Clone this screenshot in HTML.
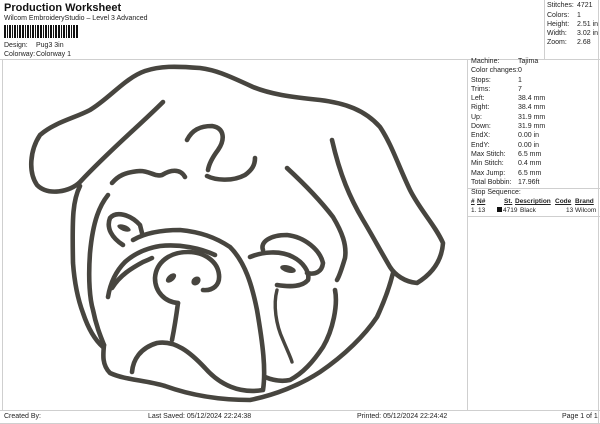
<!DOCTYPE html>
<html><head><meta charset="utf-8"><style>
*{margin:0;padding:0;box-sizing:border-box}
body{width:600px;height:424px;background:#fff;font-family:"Liberation Sans",sans-serif;color:#222;position:relative;overflow:hidden}
.a{position:absolute;white-space:nowrap}
.s{font-size:7px}
.t{font-size:6.5px}
.ln{position:absolute;background:#cfcfcf}
</style></head><body>
<div class="a" style="left:4px;top:2px;font-size:11px;font-weight:bold;color:#111">Production Worksheet</div>
<div class="a s" style="left:4px;top:15px">Wilcom EmbroideryStudio – Level 3 Advanced</div>
<svg class="a" style="left:4px;top:25px" width="74" height="13">
<g fill="#111">
<rect x="0" y="0" width="2" height="13"/><rect x="3" y="0" width="1" height="13"/><rect x="5" y="0" width="2" height="13"/><rect x="8" y="0" width="1" height="13"/><rect x="10" y="0" width="2" height="13"/><rect x="13" y="0" width="1" height="13"/><rect x="15" y="0" width="2" height="13"/><rect x="18" y="0" width="2" height="13"/><rect x="21" y="0" width="1" height="13"/><rect x="23" y="0" width="2" height="13"/><rect x="26" y="0" width="1" height="13"/><rect x="28" y="0" width="2" height="13"/><rect x="31" y="0" width="1" height="13"/><rect x="33" y="0" width="2" height="13"/><rect x="36" y="0" width="2" height="13"/><rect x="39" y="0" width="1" height="13"/><rect x="41" y="0" width="2" height="13"/><rect x="44" y="0" width="1" height="13"/><rect x="46" y="0" width="2" height="13"/><rect x="49" y="0" width="1" height="13"/><rect x="51" y="0" width="2" height="13"/><rect x="54" y="0" width="2" height="13"/><rect x="57" y="0" width="1" height="13"/><rect x="59" y="0" width="2" height="13"/><rect x="62" y="0" width="1" height="13"/><rect x="64" y="0" width="2" height="13"/><rect x="67" y="0" width="1" height="13"/><rect x="69" y="0" width="2" height="13"/><rect x="72" y="0" width="2" height="13"/>
</g></svg>
<div class="a s" style="left:4px;top:42px">Design:</div><div class="a s" style="left:36px;top:42px">Pug3 3in</div>
<div class="a s" style="left:4px;top:51px">Colorway:</div><div class="a s" style="left:36px;top:51px">Colorway 1</div>

<div class="ln" style="left:544px;top:0;width:1px;height:59px"></div>
<div class="a s" style="left:547px;top:2px">Stitches:</div><div class="a s" style="left:577px;top:2px">4721</div>
<div class="a s" style="left:547px;top:12px">Colors:</div><div class="a s" style="left:577px;top:12px">1</div>
<div class="a s" style="left:547px;top:21px">Height:</div><div class="a s" style="left:577px;top:21px">2.51 in</div>
<div class="a s" style="left:547px;top:30px">Width:</div><div class="a s" style="left:577px;top:30px">3.02 in</div>
<div class="a s" style="left:547px;top:39px">Zoom:</div><div class="a s" style="left:577px;top:39px">2.68</div>

<div class="ln" style="left:0;top:59px;width:600px;height:1px"></div>
<div class="ln" style="left:2px;top:59px;width:1px;height:351px"></div>
<div class="ln" style="left:598px;top:0;width:1px;height:423px"></div>
<div class="ln" style="left:467px;top:59px;width:1px;height:351px"></div>
<div class="ln" style="left:467px;top:188px;width:133px;height:1px"></div>
<div class="ln" style="left:467px;top:216px;width:133px;height:1px"></div>
<div class="ln" style="left:0;top:410px;width:600px;height:1px"></div>
<div class="ln" style="left:0;top:423px;width:600px;height:1px"></div>

<div class="a s" style="left:471px;top:57px;line-height:9.3px">Machine:<br>Color changes:<br>Stops:<br>Trims:<br>Left:<br>Right:<br>Up:<br>Down:<br>EndX:<br>EndY:<br>Max Stitch:<br>Min Stitch:<br>Max Jump:<br>Total Bobbin:</div>
<div class="a s" style="left:518px;top:57px;line-height:9.3px">Tajima<br>0<br>1<br>7<br>38.4 mm<br>38.4 mm<br>31.9 mm<br>31.9 mm<br>0.00 in<br>0.00 in<br>6.5 mm<br>0.4 mm<br>6.5 mm<br>17.96ft</div>
<div class="a s" style="left:471px;top:189px">Stop Sequence:</div>
<div class="a t" style="left:471px;top:198px;font-weight:bold;text-decoration:underline">#</div>
<div class="a t" style="left:477px;top:198px;font-weight:bold;text-decoration:underline">N#</div>
<div class="a t" style="left:504px;top:198px;font-weight:bold;text-decoration:underline">St.</div>
<div class="a t" style="left:515px;top:198px;font-weight:bold;text-decoration:underline">Description</div>
<div class="a t" style="left:555px;top:198px;font-weight:bold;text-decoration:underline">Code</div>
<div class="a t" style="left:575px;top:198px;font-weight:bold;text-decoration:underline">Brand</div>
<div class="a t" style="left:471px;top:207px">1.</div>
<div class="a t" style="left:478px;top:207px">13</div>
<div class="a" style="left:497px;top:207px;width:5px;height:5px;background:#111"></div>
<div class="a t" style="left:503px;top:207px">4719</div>
<div class="a t" style="left:520px;top:207px">Black</div>
<div class="a t" style="left:566px;top:207px">13 Wilcom</div>

<div class="a s" style="left:4px;top:413px">Created By:</div>
<div class="a s" style="left:148px;top:413px">Last Saved: 05/12/2024 22:24:38</div>
<div class="a s" style="left:357px;top:413px">Printed: 05/12/2024 22:24:42</div>
<div class="a s" style="left:562px;top:413px">Page 1 of 1</div>

<svg class="a" style="left:0;top:0" width="467" height="410" viewBox="0 0 467 410">
<g fill="none" stroke="#47453f" stroke-width="4.6" stroke-linecap="round" stroke-linejoin="round">
<path d="M163,102 C140,125 110,150 80,182 C70,192 48,196 37,185 C28,172 30,150 40,135 C55,122 75,118 90,110 C110,98 125,78 145,71 C160,66 175,66 200,68 C215,70 225,74 253,87 C270,94 290,97 320,100 C345,103 365,110 380,127 C392,145 398,165 410,190 C420,210 435,225 443,243 C442,258 435,272 417,283 C405,282 395,275 390,267 C380,250 372,235 363,220 C350,198 340,175 332,140"/>
<path d="M80,186 C73,200 72,215 73,263 C75,290 80,305 83,313 C88,328 95,340 103,347"/>
<path d="M108,195 C100,205 93,220 90,253 C88,280 90,300 93,310 C96,325 100,335 104,345"/>
<path d="M104,345 C103,355 102,365 110,373 C125,380 145,380 165,386 C190,395 220,400 250,400 C275,395 300,385 320,372 C345,355 365,335 377,317 C385,300 390,285 393,273"/>
<path d="M132,372 C133,360 140,348 157,343 C175,340 190,352 205,368 C220,385 240,394 263,390 C266,370 263,345 257,310 C252,285 245,262 230,247 C215,237 200,232 180,230 C160,230 145,233 133,240"/>
<path d="M108,297 C110,285 115,272 125,262 C135,253 148,248 160,246 C180,244 200,248 215,255"/>
<path d="M112,288 C120,275 132,268 143,262 C148,260 150,259 152,258"/>
<path d="M123,245 C112,238 106,228 110,218 C116,211 130,214 140,225 L142,233"/>
<ellipse cx="124" cy="228" rx="7" ry="3" fill="#47453f" stroke="none" transform="rotate(20 124 228)"/>
<path d="M112,183 C118,176 125,172 140,171 C150,171 155,177 162,175 C170,170 180,168 185,177"/>
<path d="M187,140 C192,130 200,126 212,126 C225,128 225,140 218,150 C212,158 209,164 208,170"/>
<path d="M207,176 C215,180 232,182 245,175 C252,170 255,165 255,158"/>
<path d="M178,303 C165,302 155,292 155,278 C156,262 170,252 188,252 C205,252 218,262 219,275 C220,285 213,291 203,290"/>
<path d="M178,303 C176,318 174,330 172,340"/>
<ellipse cx="171" cy="278" rx="6" ry="3.5" fill="#47453f" stroke="none" transform="rotate(-40 171 278)"/>
<ellipse cx="196" cy="281" rx="5" ry="4" fill="#47453f" stroke="none" transform="rotate(-40 196 281)"/>
<path d="M263,250 C260,242 270,235 287,235 C305,237 320,250 323,263 C322,272 315,275 307,273"/>
<path d="M250,257 C262,252 280,250 293,257 C303,262 310,272 308,280 C302,287 290,287 277,285"/>
<ellipse cx="288" cy="269" rx="8" ry="3.5" fill="#47453f" stroke="none" transform="rotate(15 288 269)"/>
<path d="M287,168 C300,180 320,200 333,217 C342,232 347,245 345,258 C342,268 340,275 337,280"/>
<path d="M335,290 C338,305 333,330 323,347 C313,362 303,373 290,380 C280,382 272,380 265,377"/>
<path d="M277,290 C273,305 276,325 283,340 C288,352 291,358 292,362" stroke-width="3.4"/>
</g>
</svg>
</body></html>
